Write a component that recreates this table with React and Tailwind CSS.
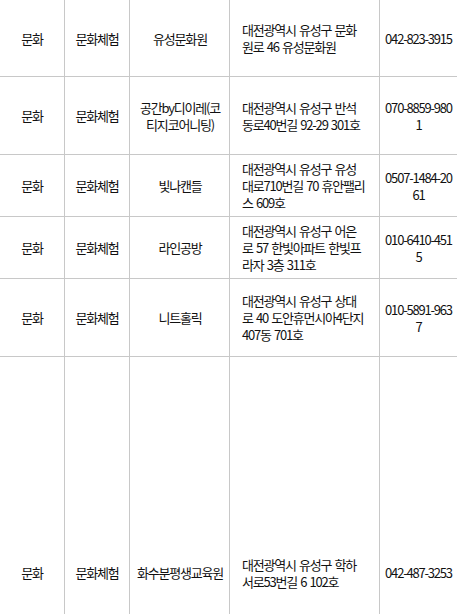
import React from "react";

const rows = [
  {
    h: "h-[77px]",
    type: "문화",
    sub: "문화체험",
    name: "유성문화원",
    addr: "대전광역시 유성구 문화원로 46 유성문화원",
    tel: "042-823-3915",
  },
  {
    h: "h-[78px]",
    type: "문화",
    sub: "문화체험",
    name: "공간by디이레(코티지코어니팅)",
    addr: "대전광역시 유성구 반석동로40번길 92-29 301호",
    tel: "070-8859-9801",
  },
  {
    h: "h-[62px]",
    type: "문화",
    sub: "문화체험",
    name: "빛나캔들",
    addr: "대전광역시 유성구 유성대로710번길 70 휴안팰리스 609호",
    tel: "0507-1484-2061",
  },
  {
    h: "h-[62px]",
    type: "문화",
    sub: "문화체험",
    name: "라인공방",
    addr: "대전광역시 유성구 어은로 57 한빛아파트 한빛프라자 3층 311호",
    tel: "010-6410-4515",
  },
  {
    h: "h-[78px]",
    type: "문화",
    sub: "문화체험",
    name: "니트홀릭",
    addr: "대전광역시 유성구 상대로 40 도안휴먼시아4단지 407동 701호",
    tel: "010-5891-9637",
  },
  {
    h: "h-[432px]",
    type: "문화",
    sub: "문화체험",
    name: "화수분평생교육원",
    addr: "대전광역시 유성구 학하서로53번길 6 102호",
    tel: "042-487-3253",
  },
];

export default function App() {
  const cell = "border-r border-b border-[#c8c8c8] align-middle p-0";

  return (
    <div className="w-[457px] h-[614px] overflow-hidden bg-white">
      <table className="table-fixed border-separate border-spacing-0 w-[458px] font-['Noto_Sans_CJK_KR',sans-serif] text-[13px] leading-[17px] tracking-[-1.2px] [word-spacing:1.5px] text-[#111] break-all">
        <colgroup>
          <col className="w-[65px]" />
          <col className="w-[65px]" />
          <col className="w-[100px]" />
          <col className="w-[150px]" />
          <col className="w-[78px]" />
        </colgroup>
        <tbody>
          {rows.map((row, i) => (
            <tr key={i}>
              <td className={`${cell} ${row.h} text-center`}>{row.type}</td>
              <td className={`${cell} text-center`}>{row.sub}</td>
              <td className={`${cell} text-center pl-[5px] pr-[4px]`}>
                {row.name}
              </td>
              <td className={`${cell} pl-[12px] pr-[13px] text-left`}>
                {row.addr}
              </td>
              <td className={`${cell} text-center px-[4px]`}>{row.tel}</td>
            </tr>
          ))}
        </tbody>
      </table>
    </div>
  );
}
